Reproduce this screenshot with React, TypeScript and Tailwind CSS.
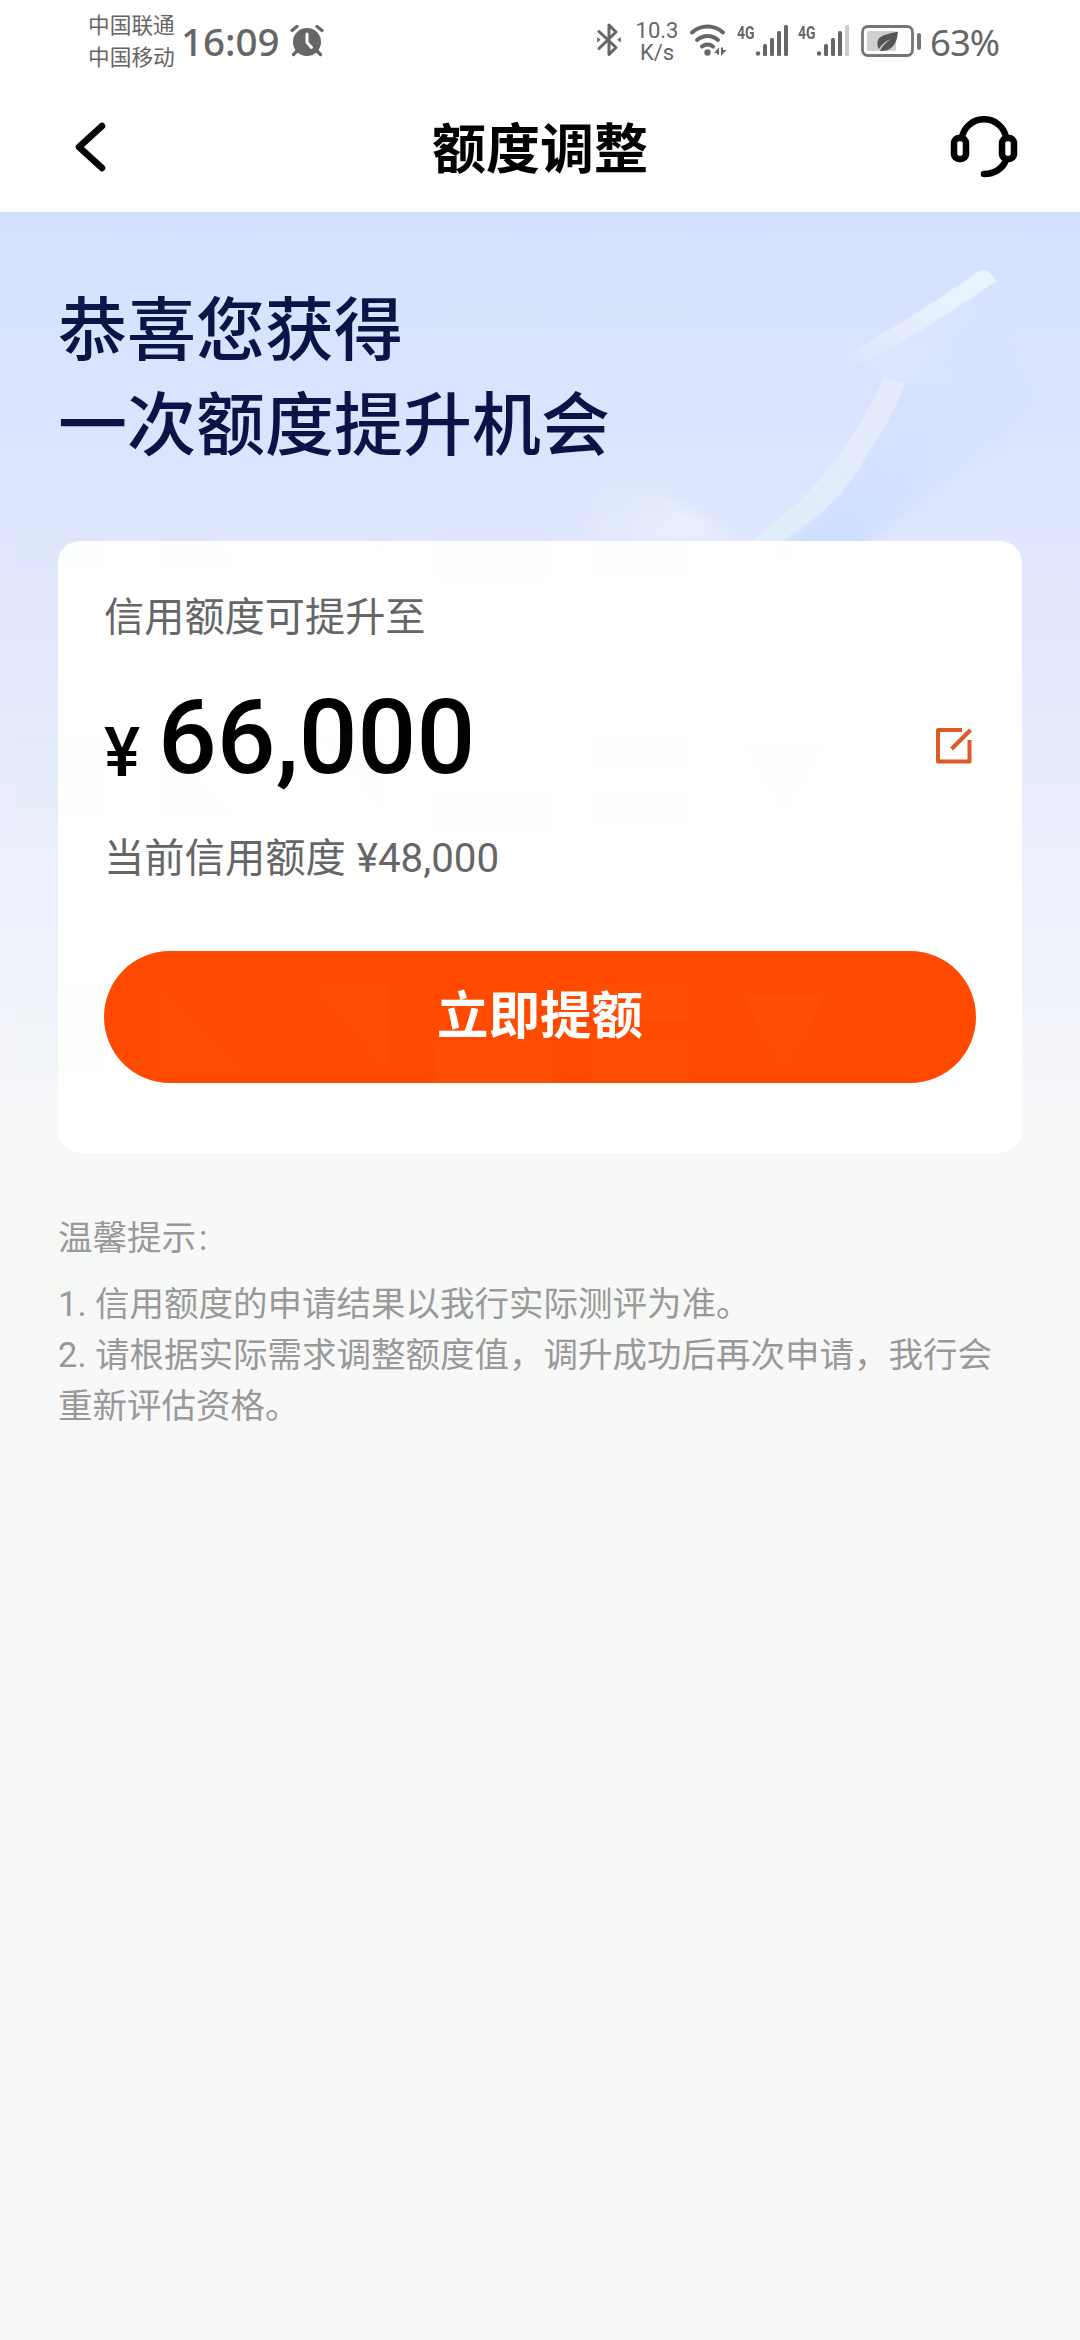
import { ReactNode } from "react";

const tips = [
  "1. 信用额度的申请结果以我行实际测评为准。",
  "2. 请根据实际需求调整额度值，调升成功后再次申请，我行会重新评估资格。",
];

function AlarmIcon() {
  return (
    <svg viewBox="0 0 34 32" className="w-[34px] h-8 fill-[#666]">
      <circle cx="17" cy="17" r="14" />
      <path d="M2 5.5 7 1.5M32 5.5 27 1.5M7 26 3.5 29.5M27 26l3.500 3.500" stroke="#666" strokeWidth="3.200" strokeLinecap="round" />
      <path d="M17 9v8.500l4.500 5" fill="none" stroke="#fff" strokeWidth="3" strokeLinecap="round" strokeLinejoin="round" />
    </svg>
  );
}

function BluetoothIcon() {
  return (
    <svg viewBox="0 0 26 36" className="w-[26px] h-9" fill="none" stroke="#666" strokeWidth="3" strokeLinejoin="round" strokeLinecap="round">
      <path d="M3 9.500 20 25.500 13 32.500V3L20 10 3 26.500" />
      <path d="M1.200 15v5.500l3.500-2.700zM24.800 15v5.500l-3.500-2.700z" fill="#666" stroke="none" />
    </svg>
  );
}

function WifiIcon() {
  return (
    <svg viewBox="0 0 38 34" className="w-[38px] h-[34px]" fill="none" stroke="#666" strokeWidth="4" strokeLinecap="round">
      <path d="M3 9.500a23 23 0 0 1 31 0" />
      <path d="M8 17a15.500 15.500 0 0 1 21 0" />
      <path d="M13 23.500a9 9 0 0 1 11 0" />
      <circle cx="18.500" cy="29.500" r="3.200" fill="#666" stroke="none" />
      <path d="M25 30l5-5.500v7h-2V30zM32 24.500V33l5.500-6h-3.500v-2.500z" fill="#666" stroke="none" />
    </svg>
  );
}

function Signal({ weak }: { weak?: boolean }) {
  return (
    <div className="flex w-[51px] h-8">
      <span className="font-['Roboto'] font-bold text-[18px] leading-[15px] w-[18px] origin-left scale-x-[0.78]">4G</span>
      <svg viewBox="0 0 33 31" className="w-[33px] h-[31px] shrink-0 fill-[#666]">
        <circle cx="3" cy="28.500" r="2.200" />
        <rect x="8" y="19" width="4" height="12" rx="1.500" />
        <rect x="15" y="13" width="4" height="18" rx="1.500" />
        <rect x="22" y="6" width="4" height="25" rx="1.500" />
        <rect x="29" y="0" width="4" height="31" rx="1.500" className={weak ? "fill-[#ccc]" : ""} />
      </svg>
    </div>
  );
}

function BatteryIcon() {
  return (
    <svg viewBox="0 0 60 32" className="w-[60px] h-8">
      <rect x="1.500" y="1.500" width="50" height="29" rx="5.500" fill="#fff" stroke="#757575" strokeWidth="2.800" />
      <rect x="6" y="6" width="29" height="20" rx="2" fill="#d0d0d0" />
      <rect x="56" y="8" width="4" height="17" rx="2" fill="#757575" />
      <path d="M37 6.500C27 9 16 10 16.500 19c0 2 .5 3.500 1.500 5 3-5 7-8 11.500-10-4.500 3.500-8.500 7-10.500 12 10 .5 17-5 18-19.500z" fill="#555" />
    </svg>
  );
}

function StatusBar() {
  return (
    <div className="h-[84px] pl-[88px] flex items-start text-[#666]">
      <div className="w-[90px] pt-[10px] text-[21.700px] leading-8 whitespace-nowrap">
        <p>中国联通</p>
        <p>中国移动</p>
      </div>
      <span className="w-[112px] pl-[3px] pt-[16px] font-['Noto_Sans'] font-medium text-[38.500px] leading-[50px]">16:09</span>
      <div className="pt-[25px]">
        <AlarmIcon />
      </div>
      <div className="ml-[272px] pt-[22px]">
        <BluetoothIcon />
      </div>
      <div className="ml-[12px] w-[46px] pt-[20px] text-center font-['Roboto'] text-[22px] leading-[22px]">
        <p>10.3</p>
        <p>K/s</p>
      </div>
      <div className="ml-[9px] pt-[23px]">
        <WifiIcon />
      </div>
      <div className="flex ml-[10px] pt-[25px] gap-[10px]">
        <Signal />
        <Signal weak />
      </div>
      <div className="ml-[12px] pt-[25px]">
        <BatteryIcon />
      </div>
      <span className="ml-[9px] pt-[17px] font-['Noto_Sans'] text-[36.500px] leading-[50px] tracking-[-1px]">63%</span>
    </div>
  );
}

function Header({ children }: { children: ReactNode }) {
  return (
    <header className="h-32 flex items-start justify-between pl-[75px] pr-[62px] text-black">
      <svg viewBox="0 0 31 50" className="w-[31px] h-[50px] mt-[38px]" fill="none" stroke="currentColor" strokeWidth="6.500" strokeLinecap="round" strokeLinejoin="round">
        <path d="M27 4 4 25l23 21" />
      </svg>
      <h1 className="pl-[24px] pt-[27px] text-[54px] leading-[80px] font-bold">{children}</h1>
      <svg viewBox="0 0 68 62" className="w-[68px] h-[62px] mt-[32px]" fill="none" stroke="currentColor" strokeWidth="6.500" strokeLinecap="round">
        <rect x="4" y="22" width="12" height="21" rx="5" />
        <rect x="52" y="22" width="12" height="21" rx="5" />
        <path d="M12 21a22.500 22.500 0 0 1 44 0M56 44c-3 8-11 14-22 14" />
      </svg>
    </header>
  );
}

function ArrowArt() {
  return (
    <svg viewBox="580 212 500 330" className="absolute right-0 top-0 w-[500px] h-[330px]">
      <defs>
        <linearGradient id="head" x1="0" y1="1" x2="1" y2="0">
          <stop offset="0" stopColor="#e2e8fe" stopOpacity="0.5" />
          <stop offset="0.5" stopColor="#e7effe" />
          <stop offset="1" stopColor="#e9f5ff" />
        </linearGradient>
        <linearGradient id="stem" x1="0" y1="1" x2="0.7" y2="0">
          <stop offset="0" stopColor="#e1effb" />
          <stop offset="1" stopColor="#e5eafe" />
        </linearGradient>
        <linearGradient id="shade" x1="0" y1="1" x2="0.8" y2="0">
          <stop offset="0" stopColor="#cbdeff" />
          <stop offset="0.5" stopColor="#d2e2ff" stopOpacity="0.8" />
          <stop offset="1" stopColor="#d2e2ff" stopOpacity="0.4" />
        </linearGradient>
        <linearGradient id="glow" x1="0" y1="0" x2="1" y2="0">
          <stop offset="0" stopColor="#e2e8fe" stopOpacity="0.8" />
          <stop offset="1" stopColor="#dbe7ff" stopOpacity="0" />
        </linearGradient>
        <linearGradient id="tail" x1="0" y1="0" x2="1" y2="0.3">
          <stop offset="0" stopColor="#e6effe" stopOpacity="0.1" />
          <stop offset="0.8" stopColor="#ebf1fe" stopOpacity="0.9" />
          <stop offset="1" stopColor="#ebf1fe" stopOpacity="0.6" />
        </linearGradient>
        <filter id="soft">
          <feGaussianBlur stdDeviation="6" />
        </filter>
      </defs>
      <path d="M779 548C850 500 880 440 905 380L985 310 1040 400C990 450 930 490 862 548z" fill="url(#shade)" filter="url(#soft)" />
      <path d="M862 363 990 288V400L905 383z" fill="url(#glow)" filter="url(#soft)" />
      <path d="M590 486Q640 476 676 500L742 542H590z" fill="url(#tail)" filter="url(#soft)" />
      <path d="M843 356C880 336 935 303 977 272Q984 268 990 273L997 281C960 305 910 340 862 363z" fill="url(#head)" />
      <path d="M884 377L905 383C893 414 882 432 870 450C850 484 835 503 812 520L779 542H750C790 513 812 490 833 463C852 438 870 410 884 377z" fill="url(#stem)" />
    </svg>
  );
}

// faint repeating shapes laid over the whole content area
function Watermark() {
  return (
    <svg className="absolute inset-0 w-full h-full pointer-events-none">
      <defs>
        <pattern id="mark" width="1080" height="252" patternUnits="userSpaceOnUse">
          <g fill="#a0ffa0" fillOpacity="0.018">
            <rect x="15" y="16" width="89" height="87" />
            <path d="M161 22v81h79zM315 16h73v86zM744 29h80l-36 66h-8z" />
            <rect x="435" y="73" width="115" height="45" />
            <rect x="593" y="16" width="95" height="35" />
            <rect x="593" y="73" width="95" height="38" />
          </g>
        </pattern>
      </defs>
      <rect width="1080" height="1932" fill="url(#mark)" />
    </svg>
  );
}

function EditIcon() {
  return (
    <svg viewBox="0 0 36 36" className="w-9 h-9" fill="none" stroke="#dd5a26" strokeWidth="4" strokeLinejoin="round">
      <path d="M26 2H2v31.500h31.500V12" />
      <path d="M15.500 21 34.500 2" />
    </svg>
  );
}

function LimitCard() {
  return (
    <section className="relative mx-[58px] h-[612px] rounded-[22px] bg-white px-[46px] pt-[47px]">
      <p className="text-[40.200px] leading-[60px] text-[#666]">信用额度可提升至</p>
      <div className="mt-[31px] h-[120px] flex items-center justify-between text-black">
        <div className="flex items-baseline font-['Roboto'] font-medium">
          <span className="text-[68px] w-[54px] relative top-[3px]">¥</span>
          <span className="text-[103.500px] leading-[120px]">66,000</span>
        </div>
        <button className="mr-[4px] mt-[14px]">
          <EditIcon />
        </button>
      </div>
      <p className="mt-[30px] text-[40.300px] leading-[60px] text-[#666] [word-spacing:1px]">当前信用额度 ¥48,000</p>
      <button className="mt-[62px] h-[132px] w-full rounded-full bg-[#ff4a00] text-white text-[51.500px] font-bold">
        立即提额
      </button>
    </section>
  );
}

export default function App() {
  return (
    <div className="w-[1080px] h-[2340px] overflow-hidden bg-white font-['Roboto','Noto_Sans_CJK_SC',sans-serif]">
      <StatusBar />
      <Header>额度调整</Header>
      <main className="relative h-[2128px] bg-[#f8f8f8] bg-[linear-gradient(180deg,#d4e1fe_0px,#dfe6fe_330px,#e4ebfd_490px,#ebeefc_620px,#f2f4fb_800px,#f7f7f9_900px,#f8f8f8_980px)]">
        <ArrowArt />
        <h2 className="relative h-[329px] pl-[58px] pt-[72px] text-[69px] leading-[95px] font-medium text-[#0b1347]">
          恭喜您获得
          <br />
          一次额度提升机会
        </h2>
        <LimitCard />
        <div className="px-[58px] pt-[60px] text-[34.500px] leading-[51px] text-[#999]">
          <p className="mb-[15px]">
            温馨提示<span className="ml-[3px]">:</span>
          </p>
          {tips.map((tip) => (
            <p key={tip}>{tip}</p>
          ))}
        </div>
        <Watermark />
      </main>
    </div>
  );
}
